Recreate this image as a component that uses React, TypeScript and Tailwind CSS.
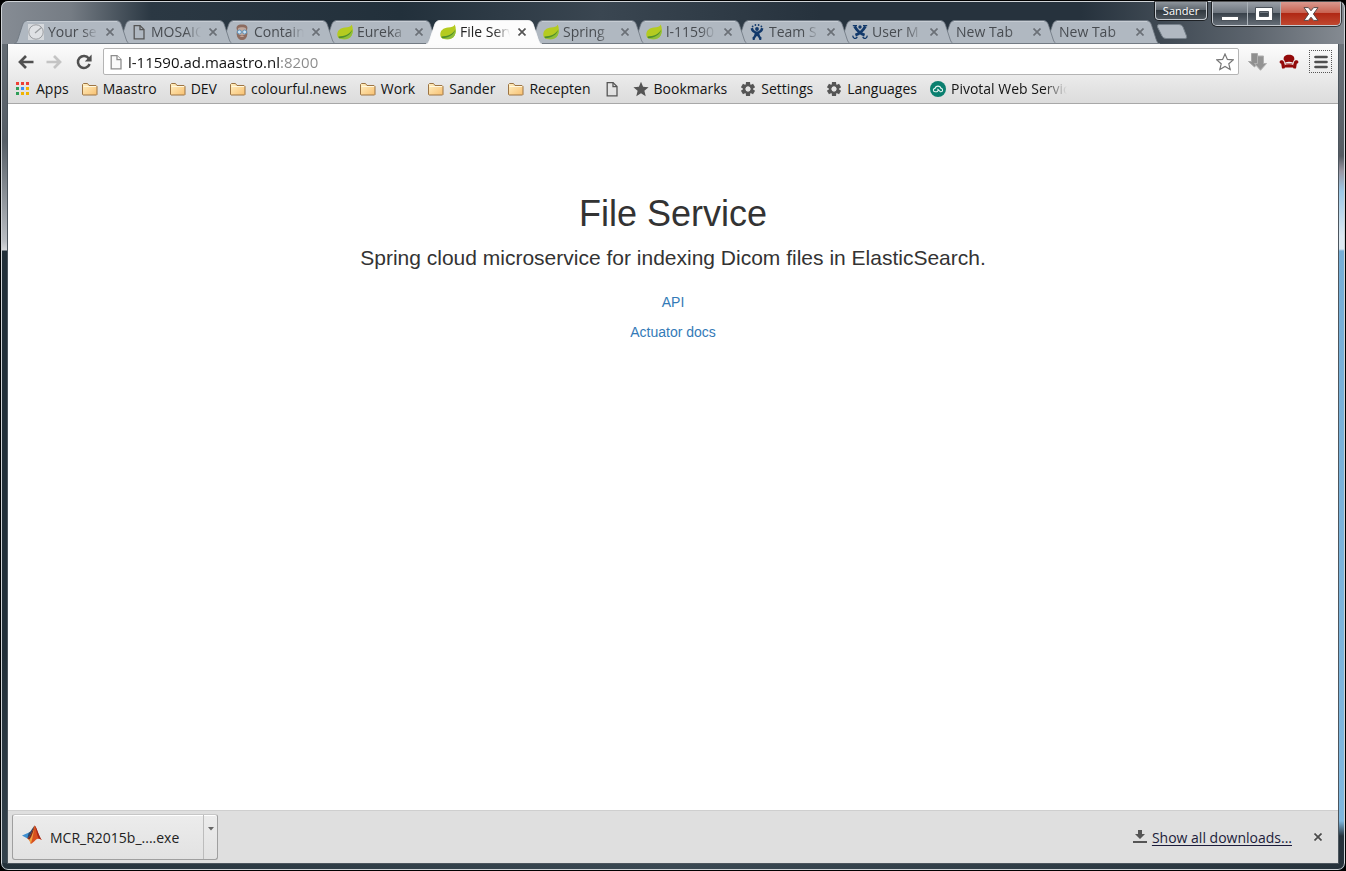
import React from "react";

const TAB_PATH = "M0 24 C2 23.5 3 22 4 19 L8.5 5 C9.5 2 11 0.5 14 0.5 L102 0.5 C105 0.5 106.5 2 107.5 5 L112 19 C113 22 114 23.5 116 24";

function Leaf() {
  return (
    <svg viewBox="0 0 16 16" className="size-4 shrink-0" aria-hidden="true">
      <path d="M14.8 0.4 C13.6 2.8 11.4 3.2 8 3.6 C3.4 4.2 0.3 6.4 0.3 10.4 C0.3 12 0.9 13.2 1.8 14 L4 15 C8 15.8 12.6 15.2 14.6 11.4 C16.2 8.4 16.2 4 14.8 0.4Z" fill="#b5cb20" />
      <path d="M15.7 5 C15 9 11.6 12 4 13.2 L1.8 14 C6 16 12.6 15.6 14.6 11.4 C15.6 9.4 15.9 7 15.7 5Z" fill="#8fbf3a" />
      <path d="M1.4 12.6 C8 12.4 12.6 10.2 15.4 5.6 C13.6 11.2 8.6 14 2 14.2Z" fill="#4f8f2c" />
    </svg>
  );
}

function Page({ light = false }: { light?: boolean }) {
  return (
    <svg viewBox="0 0 16 16" className="size-4 shrink-0" aria-hidden="true" fill={light ? "#fafafa" : "none"} stroke={light ? "#8e8e8e" : "#555"} strokeWidth="1.3">
      <path d="M3.2 1.6 H9 L13 5.6 V14.8 H3.2Z" />
      <path d="M9 1.6 V5.6 H13" />
    </svg>
  );
}

function Gauge() {
  return (
    <svg viewBox="0 0 16 16" className="size-4 shrink-0" aria-hidden="true">
      <rect width="16" height="16" fill="#d5d8dc" />
      <circle cx="8" cy="8" r="7.2" fill="#dfe1e4" stroke="#9a9da0" />
      <path d="M7 9 L13.5 3.5" stroke="#9a9da0" strokeWidth="1.2" />
    </svg>
  );
}

function Bearded() {
  return (
    <svg viewBox="0 0 16 16" className="size-4 shrink-0" aria-hidden="true">
      <path d="M3 6 C1.6 2.4 3.4 0.4 8 0.4 C12.6 0.4 14.4 2.4 13 6 L13.4 10 C13 14 11 16 8 16 C5 16 3 14 2.6 10Z" fill="#8d6c60" />
      <path d="M4 4.4 C6 3 10 3 12 4.4 L12.4 9 L10.6 11 H5.4 L3.6 9Z" fill="#c0a89c" />
      <circle cx="5.4" cy="8" r="2" fill="#cfe3f2" stroke="#5e93bd" />
      <circle cx="10.6" cy="8" r="2" fill="#cfe3f2" stroke="#5e93bd" />
      <path d="M5.6 12.2 Q8 11 10.4 12.2 Q8 13.6 5.6 12.2Z" fill="#c4a89e" />
    </svg>
  );
}

function Jira() {
  return (
    <svg viewBox="0 0 16 16" className="size-4 shrink-0" aria-hidden="true" fill="#12396b">
      <circle cx="8" cy="5" r="1.9" />
      <circle cx="3.6" cy="2.4" r="0.9" />
      <circle cx="6.4" cy="1" r="0.9" />
      <circle cx="9.6" cy="1" r="0.9" />
      <circle cx="12.4" cy="2.4" r="0.9" />
      <path d="M1.6 4.4 L4 3.8 C4.6 6.4 6.2 7.4 8 7.4 C9.8 7.4 11.4 6.4 12 3.8 L14.4 4.4 C14 6.8 12.6 8.4 10.4 9.2 C10.6 11.4 11.2 12.4 12.6 13.4 L12.2 16 H10.4 C10 14 9 12.6 8 12 C7 12.6 6 14 5.6 16 H3.8 L3.4 13.4 C4.8 12.4 5.4 11.4 5.6 9.2 C3.4 8.4 2 6.8 1.6 4.4Z" />
    </svg>
  );
}

function Confluence() {
  return (
    <svg viewBox="0 0 16 16" className="size-4 shrink-0" aria-hidden="true" fill="none" stroke="#12396b">
      <path d="M2.6 2.4 C4.6 6 8 9.6 12.6 11.2 M13.4 2.4 C11.4 6 8 9.6 3.4 11.2" strokeWidth="2.9" />
      <path d="M1 11.6 A2 2 0 1 0 5.2 12.8 M15 11.6 A2 2 0 1 1 10.8 12.8" strokeWidth="1.3" />
      <path d="M0.8 1.6 H5 M11 1.6 H15.2" strokeWidth="1.4" />
      <circle cx="8" cy="3" r="1.7" fill="#12396b" stroke="none" />
    </svg>
  );
}

function Folder() {
  return (
    <svg viewBox="0 0 16 16" className="size-4 shrink-0" aria-hidden="true">
      <defs>
        <linearGradient id="folder" x1="0" y1="0" x2="1" y2="1">
          <stop offset="0" stopColor="#fff0c4" />
          <stop offset="1" stopColor="#f8c070" />
        </linearGradient>
      </defs>
      <path d="M0.5 13.5 V3.5 L1.5 2.5 H5.5 L7 4.5 H14 L15 5.5 V13.5 L14.5 14 H1Z" fill="url(#folder)" stroke="#9c7444" />
      <path d="M1.5 5.5 H14" stroke="#fff8e0" fill="none" />
    </svg>
  );
}

function AppsGrid() {
  const colors = ["#ee4035", "#ee4035", "#ee4035", "#2f9e58", "#3b8ff7", "#f0b400", "#2f9e58", "#f0b400", "#f0b400"];
  return (
    <svg viewBox="0 0 16 16" className="size-4 shrink-0" aria-hidden="true">
      {colors.map((c, i) => (
        <rect key={i} x={1 + (i % 3) * 5} y={1 + Math.floor(i / 3) * 5} width="3" height="3" fill={c} />
      ))}
    </svg>
  );
}

function Star() {
  return (
    <svg viewBox="0 0 16 16" className="size-4 shrink-0" aria-hidden="true">
      <path d="M8 0.8 L10.1 5.8 L15.6 6.3 L11.4 9.8 L12.7 15.2 L8 12.3 L3.3 15.2 L4.6 9.8 L0.4 6.3 L5.9 5.8Z" fill="#555" />
    </svg>
  );
}

function Gear() {
  return (
    <svg viewBox="0 0 16 16" className="size-4 shrink-0" aria-hidden="true">
      <g fill="#555">
        {[0, 60, 120, 180, 240, 300].map((a) => (
          <path key={a} d="M6 1 H10 L10.4 5 H5.6Z" transform={`rotate(${a} 8 8)`} />
        ))}
      </g>
      <circle cx="8" cy="8" r="3.8" fill="none" stroke="#555" strokeWidth="2.6" />
      <circle cx="8" cy="8" r="2.4" fill="#e2e2e2" />
    </svg>
  );
}

function Pivotal() {
  return (
    <svg viewBox="0 0 16 16" className="size-4 shrink-0" aria-hidden="true">
      <circle cx="8" cy="8" r="8" fill="#0a7f6f" />
      <path d="M7 10.8 H5.2 A1.7 1.7 0 0 1 5 7.4 A3.1 3.1 0 0 1 11 7.4 A1.7 1.7 0 0 1 10.8 10.8 H10.4 L7.4 7.8 M7 10.8 L8.4 9.2" fill="none" stroke="#e6f4f1" strokeWidth="1.1" />
    </svg>
  );
}

function Cross() {
  return (
    <svg viewBox="0 0 8 8" className="size-2" aria-hidden="true">
      <path d="M0.5 0.5 L7.5 7.5 M7.5 0.5 L0.5 7.5" stroke="currentColor" strokeWidth="1.7" />
    </svg>
  );
}

type TabInfo = { title: string; icon?: React.ReactNode; active?: boolean };

const TABS: TabInfo[] = [
  { title: "Your ser", icon: <Gauge /> },
  { title: "MOSAIQ", icon: <Page /> },
  { title: "Contain", icon: <Bearded /> },
  { title: "Eureka", icon: <Leaf /> },
  { title: "File Serv", icon: <Leaf />, active: true },
  { title: "Spring", icon: <Leaf /> },
  { title: "l-11590", icon: <Leaf /> },
  { title: "Team S", icon: <Jira /> },
  { title: "User M", icon: <Confluence /> },
  { title: "New Tab" },
  { title: "New Tab" },
];

const BOOKMARKS: { label: string; icon: React.ReactNode }[] = [
  { label: "Apps", icon: <AppsGrid /> },
  { label: "Maastro", icon: <Folder /> },
  { label: "DEV", icon: <Folder /> },
  { label: "colourful.news", icon: <Folder /> },
  { label: "Work", icon: <Folder /> },
  { label: "Sander", icon: <Folder /> },
  { label: "Recepten", icon: <Folder /> },
  { label: "", icon: <Page /> },
  { label: "Bookmarks", icon: <Star /> },
  { label: "Settings", icon: <Gear /> },
  { label: "Languages", icon: <Gear /> },
];

function Tab({ tab, order }: { tab: TabInfo; order: number }) {
  return (
    <div role="tab" aria-selected={!!tab.active} className="relative flex h-6 w-[103px] shrink items-center" style={{ zIndex: tab.active ? 20 : order }}>
      <svg viewBox="0 0 116 24" preserveAspectRatio="none" className="absolute top-0 -left-px h-6 w-[116px]" aria-hidden="true">
        <path d={TAB_PATH} fill={tab.active ? "#fcfcfc" : "#b0b8c1"} />
        <path d={TAB_PATH} fill="none" stroke={tab.active ? "#fff" : "#6d7680"} strokeOpacity="0.8" />
        {!tab.active && <path d="M13 1.5 H103" stroke="#c6ccd3" />}
        {!tab.active && <path d="M0 23.5 H116" stroke="#727a83" />}
      </svg>
      <div className={`relative flex w-full items-center gap-1 ${tab.icon ? "pl-[13px]" : "pl-[14px]"}`}>
        {tab.icon}
        <span className={`min-w-0 flex-1 overflow-hidden whitespace-nowrap mask-[linear-gradient(to_right,#000_calc(100%-16px),transparent)] ${tab.active ? "text-[#222]" : "text-[#484c51]"}`}>{tab.title}</span>
        <button aria-label={`Close ${tab.title}`} className={`flex size-4 shrink-0 items-center justify-center ${tab.active ? "text-[#555]" : "text-[#6b7077]"}`}>
          <Cross />
        </button>
      </div>
    </div>
  );
}

function TitleBar() {
  return (
    <header className="relative flex h-[42px] shrink-0 items-end">
      <div role="tablist" className="flex min-w-0 flex-1 pl-2">
        {TABS.map((t, i) => (
          <Tab key={i} tab={t} order={TABS.length - i} />
        ))}
        <button aria-label="Open new tab" className="relative mt-1 ml-2 h-4 w-8">
          <svg viewBox="0 0 32 16" className="h-4 w-8" aria-hidden="true">
            <path d="M3 0.5 H23 Q26 0.5 27 3 L30.5 12 Q31.5 14.5 29 14.5 H10 Q7 14.5 6 12 L1.5 3 Q1 0.5 3 0.5Z" fill="#b0b8c1" stroke="#76808a" />
          </svg>
        </button>
      </div>
      <div className="absolute top-0 -right-0.5 flex items-start gap-[5px]">
        <button className="flex h-[18px] w-[52px] items-center justify-center rounded-b-[4px] border border-t-0 border-[#c5cad0] bg-[linear-gradient(#8d949b,#5c646c_48%,#30383f_50%,#4e565e)] pb-px text-[11px] leading-none font-medium text-white ring-1 ring-black/60">Sander</button>
        <div className="flex h-[24px] overflow-hidden rounded-b-[5px] border border-t-0 border-[#c5cad0] ring-1 ring-black/60">
          <button aria-label="Minimize" className="flex w-[35px] items-center justify-center border-r border-[#aab1b8] bg-[linear-gradient(#9aa0a8,#6c747d_48%,#39424b_50%,#666e77)]">
            <svg viewBox="0 0 18 14" className="h-3.5 w-[18px]" aria-hidden="true">
              <rect x="0.5" y="9.5" width="17" height="4" fill="#fff" stroke="#4b525a" />
            </svg>
          </button>
          <button aria-label="Maximize" className="flex w-[33px] items-center justify-center border-r border-[#aab1b8] bg-[linear-gradient(#9aa0a8,#6c747d_48%,#39424b_50%,#666e77)]">
            <svg viewBox="0 0 18 14" className="h-3.5 w-[18px]" aria-hidden="true">
              <path d="M0.5 0.5 H17.5 V13.5 H0.5Z M4.5 4.5 V9.5 H13.5 V4.5Z" fill="#fff" fillRule="evenodd" stroke="#4b525a" />
            </svg>
          </button>
          <button aria-label="Close window" className="flex w-[59px] items-center justify-center bg-[linear-gradient(#d9998f,#c8614f_48%,#b02814_50%,#c04830)]">
            <svg viewBox="0 0 18 14" className="h-3.5 w-[18px]" aria-hidden="true">
              <path d="M2 0.6 H6.4 L9 3.8 L11.6 0.6 H16 L11.4 7 L16 13.4 H11.6 L9 10.2 L6.4 13.4 H2 L6.6 7Z" fill="#fff" stroke="#5a4a4a" />
            </svg>
          </button>
        </div>
      </div>
    </header>
  );
}

function Toolbar() {
  return (
    <div className="flex h-[35px] items-center pl-1">
      <button aria-label="Back" className="flex w-7 justify-center">
        <svg viewBox="0 0 16 16" className="size-4" aria-hidden="true">
          <path d="M15.5 8 H3 M8 2 L2 8 L8 14" fill="none" stroke="#505050" strokeWidth="2.7" />
        </svg>
      </button>
      <button aria-label="Forward" className="flex w-7 justify-center">
        <svg viewBox="0 0 16 16" className="size-4" aria-hidden="true">
          <path d="M0.5 8 H13 M8 2 L14 8 L8 14" fill="none" stroke="#c4c4c4" strokeWidth="2.7" />
        </svg>
      </button>
      <button aria-label="Reload" className="flex w-8 justify-center">
        <svg viewBox="0 0 16 16" className="size-4" aria-hidden="true">
          <path d="M12.8 4.4 A6 6 0 1 0 13.6 10" fill="none" stroke="#505050" strokeWidth="2.5" />
          <path d="M15.6 0.6 V7.4 H8.8Z" fill="#505050" />
        </svg>
      </button>
      <div className="ml-[3px] flex h-[27px] min-w-0 flex-1 items-center rounded-[2px] border border-[#b4b4b4] bg-white px-1">
        <Page light />
        <input aria-label="Address" defaultValue="l-11590.ad.maastro.nl:8200" className="ml-1 h-full min-w-0 flex-1 bg-[linear-gradient(to_right,#111_152px,#8a8a8a_152px)] bg-clip-text text-[15px] text-transparent caret-black outline-none" />
        <button aria-label="Bookmark this page">
          <svg viewBox="0 0 18 18" className="size-[18px]" aria-hidden="true">
            <path d="M9 1 L11.4 6.4 L17.2 6.9 L12.8 10.8 L14.2 16.6 L9 13.5 L3.8 16.6 L5.2 10.8 L0.8 6.9 L6.6 6.4Z" fill="#fff" stroke="#777" strokeWidth="1.2" />
          </svg>
        </button>
      </div>
      <button aria-label="Downloads extension" className="flex w-[38px] justify-center">
        <svg viewBox="0 0 20 18" className="h-[18px] w-5" aria-hidden="true">
          <path d="M3.5 0.5 H9.5 V7.5 H12 L6.5 14 L0.5 8.5 H3.5Z" fill="#8f8f8f" stroke="#a8a8a8" />
          <path d="M9.5 3 H15.5 V10.5 H18.5 L12.5 17.3 L6.5 10.5 H9.5Z" fill="#939393" stroke="#b0b0b0" />
        </svg>
      </button>
      <button aria-label="Couch extension" className="flex w-6 justify-center">
        <svg viewBox="0 0 20 16" className="h-4 w-5" aria-hidden="true" fill="#930a0a">
          <path d="M4.6 5.4 C4.6 2.4 6.2 0.8 10 0.8 C13.8 0.8 15.4 2.4 15.4 5.4 C14.4 6.2 14.2 7.4 14 8.4 C11.4 7.4 8.6 7.4 6 8.4 C5.8 7.4 5.6 6.2 4.6 5.4Z" />
          <path d="M0.6 8 C0.6 5.8 4.4 5.6 5 8 L5.6 10.2 C8.2 8.6 11.8 8.6 14.4 10.2 L15 8 C15.6 5.6 19.4 5.8 19.4 8 C19.4 9.2 18.4 9.6 17.8 9.8 L17 14.4 H14.6 L14 13.4 H6 L5.4 14.4 H3 L2.2 9.8 C1.6 9.6 0.6 9.2 0.6 8Z" />
          <path d="M5.6 10.8 C8.2 9.4 11.8 9.4 14.4 10.8" stroke="#e8d0d0" strokeWidth="0.9" fill="none" />
        </svg>
      </button>
      <button aria-label="Menu" className="mr-[6px] ml-2 flex size-[23px] items-center justify-center border border-dotted border-[#555]">
        <svg viewBox="0 0 14 14" className="size-3.5" aria-hidden="true">
          <path d="M1.5 2 H12.5 M1.5 7 H12.5 M1.5 12 H12.5" stroke="#505050" strokeWidth="2.7" strokeLinecap="round" />
        </svg>
      </button>
    </div>
  );
}

function BookmarksBar() {
  return (
    <nav aria-label="Bookmarks" className="flex h-6 items-start gap-[13px] overflow-hidden pt-px pl-[7px] whitespace-nowrap text-[#141414]">
      {BOOKMARKS.map((b, i) => (
        <a key={i} href="#" aria-label={b.label || "Page"} className="flex h-[18px] shrink-0 items-center gap-[5px]">
          {b.icon}
          {b.label && <span>{b.label}</span>}
        </a>
      ))}
      <a href="#" className="flex h-[18px] w-[137px] shrink-0 items-center gap-[5px]">
        <Pivotal />
        <span className="overflow-hidden mask-[linear-gradient(to_right,#000_80%,transparent)]">Pivotal Web Services</span>
      </a>
    </nav>
  );
}

function DownloadShelf() {
  return (
    <footer className="flex h-[53px] shrink-0 items-center border-t border-[#cfcfcf] bg-[#dfdfdf] px-1">
      <div className="flex h-[46px] w-[206px] rounded-[3px] border border-[#9f9f9f] border-t-[#c6c6c6] bg-linear-to-b from-[#ececec] to-[#e2e2e2] text-[#222] shadow-[inset_0_1px_0_#fff]">
        <button className="flex min-w-0 flex-1 items-center gap-[7px] pl-2">
          <svg viewBox="0 0 22 22" className="mb-1 h-[22px] w-[22px]" aria-hidden="true">
            <path d="M1 11.6 L8 8.4 L10.6 10.6 L6.4 14.6Z" fill="#3f8fd0" />
            <path d="M8 8.4 C10 7.6 11.4 3.6 13.6 1.4 L10.6 10.6 L6.4 14.6 C7 12 7 10 8 8.4Z" fill="#2d4a6e" />
            <path d="M13.6 1.4 C16 3.6 17.6 11.6 20.8 16 C18 14.6 16.4 14.4 14.6 16 C13 17.4 11.4 19.4 9.8 20 C9 17.4 8 15.6 6.4 14.6 C9.6 12.6 11.8 6 13.6 1.4Z" fill="#d8501f" />
            <path d="M13.6 1.4 C12.8 7 11.6 14.6 9.8 20 C9 17.4 8 15.6 6.4 14.6 C9.6 12.6 11.8 6 13.6 1.4Z" fill="#f0a040" />
            <path d="M13.6 1.4 C12 5 10 11 6.4 14.6 L8.6 15.6 C11.4 11 12.8 6 13.6 1.4Z" fill="#7a2a24" />
            <path d="M13.6 1.4 C15.4 5 15.6 10 17.6 14.6 C18.8 14.8 19.8 15.4 20.8 16 C17.6 11.6 16 3.6 13.6 1.4Z" fill="#a3261a" />
          </svg>
          <span className="pt-0.5">MCR_R2015b_....exe</span>
        </button>
        <button aria-label="Download options" className="flex w-3.5 justify-center border-l border-[#bcbcbc] pt-3">
          <svg viewBox="0 0 6 4" className="h-1 w-1.5" aria-hidden="true">
            <path d="M0 0 H6 L3 3.4Z" fill="#666" />
          </svg>
        </button>
      </div>
      <div className="ml-auto flex items-center pr-[10px]">
        <svg viewBox="0 0 16 16" className="mr-1 size-4" aria-hidden="true" fill="#555">
          <path d="M6 1 H10 V5 H13 L8 10 L3 5 H6Z" />
          <rect x="1" y="12" width="14" height="2" />
        </svg>
        <a href="#" className="pt-0.5 text-[#1c1c3a] underline underline-offset-2">Show all downloads...</a>
        <button aria-label="Close downloads bar" className="ml-5 flex size-3 items-center justify-center text-[#4a4a4a]">
          <Cross />
        </button>
      </div>
    </footer>
  );
}

export default function App() {
  return (
    <div className="min-h-screen bg-black font-['Open_Sans','Noto_Sans',sans-serif] text-[14px] leading-[18px]">
      <div className="relative flex min-h-screen flex-col overflow-hidden rounded-lg border border-black bg-[linear-gradient(#6a7178_0,#555d65_140px,#b9bdc2_240px,#d5d7da_249px,#222f38_250px,#222f38_75%,#35434d)]">
        <div className="absolute inset-y-0 right-0 w-2.5 bg-[linear-gradient(#767d84_0,#545b62_155px,#9a97a3_170px,#9cc8e6_190px,#dce9f2_235px,#dce9f2_248px,#76aed6_250px,#7fb7de_820px,#26323b_835px)]" />
        <div className="absolute inset-x-0 bottom-0 h-[7px] bg-linear-to-r from-[#24313a] via-[#3a4852] to-[#26323b]" />
        <div className="absolute inset-x-0 top-0 h-[43px] bg-[linear-gradient(to_right,#868c94,#757c84_70px,#2b3843_150px,#22303b_400px,#3a4651_600px,#26323d_820px,#26323d_1080px,#5c646d_1250px,#858b92)]" />
        <div className="relative flex flex-1 flex-col rounded-[7px] border border-[#cfd3d7] px-[5px] pb-[5px]">
          <TitleBar />
          <div className="flex flex-1 flex-col border border-t-0 border-[#4c555d] bg-white">
            <div className="rounded-t-[3px] border-b border-[#a8a8a8] bg-linear-to-b from-[#fcfcfc] to-[#dcdcdc]">
              <Toolbar />
              <BookmarksBar />
            </div>
            <main className="flex flex-1 flex-col items-center px-4 pt-[90px] text-center font-['Liberation_Sans',Arial,sans-serif] text-[#333]">
              <h1 className="text-[36px] leading-10">File Service</h1>
              <p className="mt-[9px] text-[21px] leading-[29px]">Spring cloud microservice for indexing Dicom files in ElasticSearch.</p>
              <div className="mt-5 flex flex-col items-center gap-[10px] leading-5 text-[#337ab7]">
                <a href="#">API</a>
                <a href="#">Actuator docs</a>
              </div>
            </main>
            <DownloadShelf />
          </div>
        </div>
      </div>
    </div>
  );
}
